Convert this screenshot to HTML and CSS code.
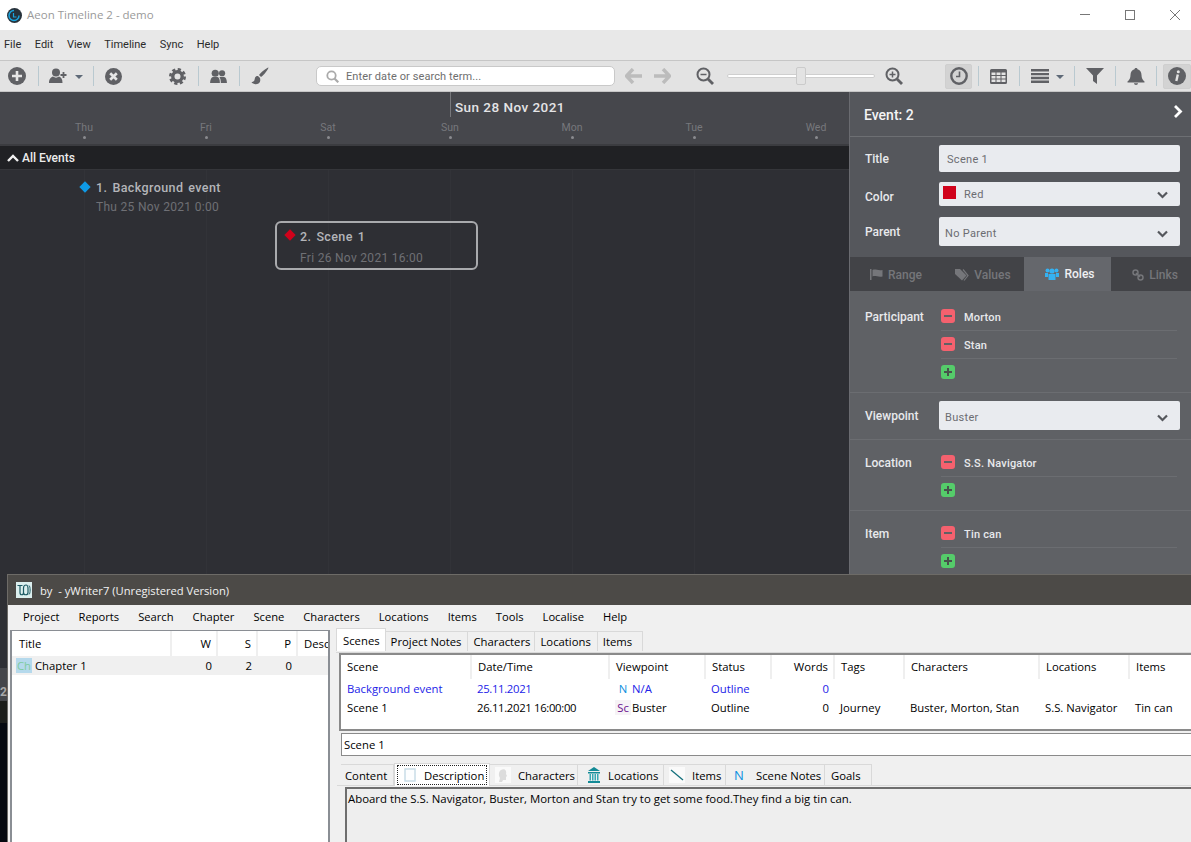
FILE: index.html
```html
<!DOCTYPE html>
<html lang="en">
<head>
    <meta charset="UTF-8">
    <meta name="viewport" content="width=device-width, initial-scale=1.0">
    <title>Aeon Timeline 2 - demo</title>
    <link rel="stylesheet" href="styles.css">
</head>
<body>

    <!-- Aeon Timeline window -->
    <div class="aeon">
        <div class="titlebar">
            <svg class="logo" width="15" height="15" viewBox="0 0 15 15"><circle cx="7.5" cy="7.5" r="7.5" fill="#27323b"/><path d="M7 2.5a5 5 0 1 0 5 5" fill="none" stroke="#1aa5e0" stroke-width="1.5"/><path d="M6.5 5v4h3" fill="none" stroke="#1aa5e0" stroke-width="1.2"/></svg>
            <span class="app-name">Aeon Timeline 2 - demo</span>
            <div class="window-buttons">
                <svg width="10" height="10" viewBox="0 0 10 10"><path d="M0 4.5h10" stroke="#777"/></svg>
                <svg width="10" height="10" viewBox="0 0 10 10"><rect x=".5" y=".5" width="9" height="9" fill="none" stroke="#777"/></svg>
                <svg width="10" height="10" viewBox="0 0 10 10"><path d="M0 0l10 10M10 0L0 10" stroke="#777"/></svg>
            </div>
        </div>

        <div class="menubar">
            <span>File</span><span>Edit</span><span>View</span><span>Timeline</span><span>Sync</span><span>Help</span>
        </div>

        <div class="toolbar">
            <svg class="tool m8" width="18" height="18" viewBox="0 0 18 18"><circle cx="9" cy="9" r="9" fill="#606165"/><path d="M9 4v10M4 9h10" stroke="#e6e6e6" stroke-width="2.6"/></svg>
            <i class="sep m12"></i>
            <svg class="tool m10" width="18" height="16" viewBox="0 0 18 16"><circle cx="7" cy="4.5" r="4" fill="#606165"/><path d="M0 15c0-4 2-6 4-6.500 2 1.500 4 1.500 6 0 2 .5 3.500 2.500 3.500 6.500z" fill="#606165"/><path d="M14.500 4v6M11.500 7h6" stroke="#606165" stroke-width="1.800"/></svg>
            <i class="caret m8"></i>
            <i class="sep m10"></i>
            <svg class="tool m11" width="17" height="17" viewBox="0 0 18 18"><circle cx="9" cy="9" r="9" fill="#606165"/><path d="M5.500 5.500l7 7M12.500 5.500l-7 7" stroke="#e6e6e6" stroke-width="2.800"/></svg>
            <svg class="tool m47" width="17" height="17" viewBox="0 0 18 18"><circle cx="9" cy="9" r="5" fill="none" stroke="#606165" stroke-width="3.600"/><circle cx="9" cy="9" r="7.600" fill="none" stroke="#606165" stroke-width="2.800" stroke-dasharray="3.400 2.570"/></svg>
            <i class="sep m12"></i>
            <svg class="tool m11" width="17" height="15" viewBox="0 0 18 16"><circle cx="5.500" cy="4.500" r="3.800" fill="#606165"/><circle cx="12.800" cy="4.500" r="3.300" fill="#606165"/><path d="M0 15c0-4 1.500-6 3-6.500h5c1.500.5 2.500 2.500 2.500 6.500z" fill="#606165"/><path d="M11.500 15c0-3-.5-5-1.500-6.500h5c1.800.5 3 2.500 3 6.500z" fill="#606165"/></svg>
            <i class="sep m12"></i>
            <svg class="tool m11" width="18" height="18" viewBox="0 0 18 18"><path d="M17.500.5c-2 .5-7 4-9.500 7.500l2 2c3.500-2.500 7-7.500 7.500-9.500z" fill="#606165"/><path d="M7 9c-3 0-3 2-3.500 4-.3 1.500-2 2-3 2 1 2 4.500 3 7 1.500 2-1.300 2-3.500 1.500-5.500z" fill="#606165"/></svg>

            <div class="search m47">
                <svg width="13" height="13" viewBox="0 0 13 13"><circle cx="5.500" cy="5.500" r="4.200" fill="none" stroke="#aaa" stroke-width="1.800"/><path d="M8.500 8.500l3.800 3.800" stroke="#aaa" stroke-width="2.200"/></svg>
                <span>Enter date or search term...</span>
            </div>

            <svg class="tool m10" width="18" height="16" viewBox="0 0 18 16"><path d="M8 1L1.500 8 8 15M2 8h15" fill="none" stroke="#bcbcbc" stroke-width="3.400"/></svg>
            <svg class="tool m10" width="18" height="16" viewBox="0 0 18 16"><path d="M10 1l6.500 7-6.500 7M16 8H1" fill="none" stroke="#bcbcbc" stroke-width="3.400"/></svg>
            <svg class="tool m25" width="18" height="18" viewBox="0 0 18 18"><circle cx="7.500" cy="7.500" r="6" fill="none" stroke="#606165" stroke-width="2"/><path d="M12 12l5 5" stroke="#606165" stroke-width="2.800"/><path d="M4.500 7.500h6" stroke="#606165" stroke-width="1.500"/></svg>
            <div class="zoom-slider m13"><i class="zoom-thumb"></i></div>
            <svg class="tool m10" width="18" height="18" viewBox="0 0 18 18"><circle cx="7.500" cy="7.500" r="6" fill="none" stroke="#606165" stroke-width="2"/><path d="M12 12l5 5" stroke="#606165" stroke-width="2.800"/><path d="M4.500 7.500h6M7.500 4.500v6" stroke="#606165" stroke-width="1.500"/></svg>

            <div class="tool-on m42">
                <svg width="18" height="18" viewBox="0 0 18 18"><circle cx="9" cy="9" r="7.700" fill="none" stroke="#606165" stroke-width="2.400"/><path d="M9.500 4.500v5H6" fill="none" stroke="#606165" stroke-width="1.600"/></svg>
            </div>
            <i class="sep m6"></i>
            <svg class="tool m11" width="17" height="15" viewBox="0 0 17 15"><path fill="#606165" d="M0 1.500A1.500 1.500 0 0 1 1.500 0h14A1.500 1.500 0 0 1 17 1.500v12a1.500 1.500 0 0 1-1.500 1.500h-14A1.500 1.500 0 0 1 0 13.500z"/><path fill="#e3e3e3" d="M1.500 3.500h4v2.500h-4zM6.500 3.500h4v2.500h-4zM11.500 3.500h4v2.500h-4zM1.500 7h4v2.500h-4zM6.500 7h4v2.500h-4zM11.500 7h4v2.500h-4zM1.500 10.500h4V13h-4zM6.500 10.500h4V13h-4zM11.500 10.500h4V13h-4z"/></svg>
            <i class="sep m12"></i>
            <svg class="tool m11" width="18" height="14" viewBox="0 0 18 14"><path fill="#606165" d="M0 0h18v2.400H0zM0 3.900h18v2.400H0zM0 7.800h18v2.400H0zM0 11.600h18V14H0z"/></svg>
            <i class="caret m7 caret-blue"></i>
            <i class="sep m10"></i>
            <svg class="tool m11" width="18" height="16" viewBox="0 0 18 16"><path fill="#606165" d="M0 0h18L11 7.500V16l-4-3V7.500z"/></svg>
            <i class="sep m11"></i>
            <svg class="tool m11" width="18" height="17" viewBox="0 0 18 17"><path fill="#606165" d="M9 0c1 0 1.500.6 1.500 1.300C13 2 14.500 4 14.500 7c0 3 1 5 3 6.500V14.500H.5V13.500c2-1.500 3-3.500 3-6.500 0-3 1.500-5 4-5.700C7.500.6 8 0 9 0zM7 15.300h4C11 16.300 10 17 9 17s-2-.7-2-1.700z"/></svg>
            <i class="sep m11"></i>
            <div class="tool-on m6 tool-info">
                <svg width="18" height="18" viewBox="0 0 18 18"><circle cx="9" cy="9" r="9" fill="#606165"/><circle cx="10.300" cy="4.700" r="1.500" fill="#e3e3e3"/><path d="M9.800 7.500l-1.500 6.500" stroke="#e3e3e3" stroke-width="2.400"/></svg>
            </div>
        </div>

        <div class="main">
            <!-- Timeline -->
            <div class="timeline">
                <div class="time-head">
                    <div class="month-row"><span class="month">Sun 28 Nov 2021</span></div>
                    <div class="day-row">
                        <div class="day">Thu<i></i></div>
                        <div class="day">Fri<i></i></div>
                        <div class="day">Sat<i></i></div>
                        <div class="day">Sun<i></i></div>
                        <div class="day">Mon<i></i></div>
                        <div class="day">Tue<i></i></div>
                        <div class="day">Wed<i></i></div>
                    </div>
                </div>
                <div class="group-bar">
                    <svg width="12" height="8" viewBox="0 0 12 8"><path d="M1 7l5-5 5 5" fill="none" stroke="#f2f2f2" stroke-width="2.400"/></svg>
                    All Events
                </div>
                <div class="canvas">
                    <div class="event event-one">
                        <i class="diamond diamond-blue"></i>
                        <div class="event-title">1. Background event</div>
                        <div class="event-date">Thu 25 Nov 2021 0:00</div>
                    </div>
                    <div class="event event-two">
                        <i class="diamond diamond-red"></i>
                        <div class="event-title">2. Scene 1</div>
                        <div class="event-date">Fri 26 Nov 2021 16:00</div>
                    </div>
                </div>
            </div>

            <!-- Inspector -->
            <div class="panel">
                <div class="panel-head">
                    <span>Event: 2</span>
                    <svg width="10" height="13" viewBox="0 0 10 13"><path d="M2 1l5.500 5.500L2 12" fill="none" stroke="#fff" stroke-width="2.800"/></svg>
                </div>

                <div class="fields">
                    <div class="field field-title">
                        <label>Title</label>
                        <div class="input">Scene 1</div>
                    </div>
                    <div class="field field-color">
                        <label>Color</label>
                        <div class="input select color-select">
                            <i class="swatch"></i><span>Red</span>
                            <svg class="chevron" width="11" height="8" viewBox="0 0 11 8"><path d="M1 1.500l4.500 4.500L10 1.500" fill="none" stroke="#55575c" stroke-width="2.200"/></svg>
                        </div>
                    </div>
                    <div class="field field-parent">
                        <label>Parent</label>
                        <div class="input select">
                            <span>No Parent</span>
                            <svg class="chevron" width="11" height="8" viewBox="0 0 11 8"><path d="M1 1.500l4.500 4.500L10 1.500" fill="none" stroke="#55575c" stroke-width="2.200"/></svg>
                        </div>
                    </div>
                </div>

                <div class="tabs">
                    <div class="tab tab-range">
                        <svg width="13" height="11" viewBox="0 0 13 11"><path fill="#75767a" d="M0 0h1.500v11H0zM2.500 1c3-1.500 5 1 10 0v6.500c-5 1-7-1.500-10 0z"/></svg>
                        Range
                    </div>
                    <div class="tab tab-values">
                        <svg width="14" height="12" viewBox="0 0 14 12"><path fill="#75767a" d="M0 0h5l6.500 6.500L7 11.500 0 5z"/><path d="M8 .5l5 6-4 5" fill="none" stroke="#75767a" stroke-width="1.200"/></svg>
                        Values
                    </div>
                    <div class="tab tab-roles active">
                        <svg width="14" height="12" viewBox="0 0 14 12"><g fill="#35b2f2"><circle cx="2.500" cy="2.500" r="2"/><circle cx="11.500" cy="2.500" r="2"/><circle cx="7" cy="3" r="2.600"/><path d="M0 5h3v4H0zM11 5h3v4h-3zM3.500 6h7v6h-7z"/></g></svg>
                        Roles
                    </div>
                    <div class="tab tab-links">
                        <svg width="12" height="12" viewBox="0 0 12 12"><g fill="none" stroke="#75767a" stroke-width="1.500"><circle cx="3.500" cy="3.500" r="2.500"/><circle cx="8.500" cy="8.500" r="2.500"/><path d="M4 4l4 4"/></g></svg>
                        Links
                    </div>
                </div>

                <div class="section section-first">
                    <label>Participant</label>
                    <div class="role-list">
                        <div class="role-row"><i class="btn-minus"></i>Morton</div>
                        <div class="role-row"><i class="btn-minus"></i>Stan</div>
                        <div class="role-add"><i class="btn-plus"></i></div>
                    </div>
                </div>
                <div class="section section-select">
                    <label>Viewpoint</label>
                    <div class="input select select-tall">
                        <span>Buster</span>
                        <svg class="chevron" width="11" height="8" viewBox="0 0 11 8"><path d="M1 1.500l4.500 4.500L10 1.500" fill="none" stroke="#55575c" stroke-width="2.200"/></svg>
                    </div>
                </div>
                <div class="section">
                    <label>Location</label>
                    <div class="role-list">
                        <div class="role-row"><i class="btn-minus"></i>S.S. Navigator</div>
                        <div class="role-add"><i class="btn-plus"></i></div>
                    </div>
                </div>
                <div class="section">
                    <label>Item</label>
                    <div class="role-list">
                        <div class="role-row"><i class="btn-minus"></i>Tin can</div>
                        <div class="role-add"><i class="btn-plus"></i></div>
                    </div>
                </div>
            </div>
        </div>
    </div>

    <!-- What shows behind, left of the yWriter window -->
    <div class="behind"><div class="behind-bar">02</div><div class="behind-mid"></div></div>

    <!-- yWriter window -->
    <div class="yw">
        <div class="yw-title">
            <svg width="16" height="16" viewBox="0 0 16 16"><rect width="16" height="16" fill="#dcefee"/><path d="M1.500 3.500h5M4 3.500v7c0 3 3.500 3 3.500 0V6M7.500 10.500c0 3 4.500 3 4.500 0V6c0-2-1-3-2-3s-2.500 1-2.500 3" fill="none" stroke="#1d5a63" stroke-width="1.200"/><path d="M13 3.500c1.500 1 1.500 8 0 9" fill="none" stroke="#1d5a63"/></svg>
            <span>by&nbsp; - yWriter7 (Unregistered Version)</span>
        </div>
        <div class="yw-menu">
            <span>Project</span><span>Reports</span><span>Search</span><span>Chapter</span><span>Scene</span><span>Characters</span><span>Locations</span><span>Items</span><span>Tools</span><span>Localise</span><span>Help</span>
        </div>
        <div class="yw-body">
            <!-- Chapter list -->
            <div class="chapters">
                <div class="ch-row ch-head">
                    <span class="ch-title">Title</span>
                    <span class="ch-num">W</span>
                    <span class="ch-num ch-s">S</span>
                    <span class="ch-num ch-s">P</span>
                    <span class="ch-desc">Desc</span>
                </div>
                <div class="ch-row ch-item">
                    <span class="ch-title"><b class="ch-icon">Ch</b>Chapter 1</span>
                    <span class="ch-num">0</span>
                    <span class="ch-num ch-s">2</span>
                    <span class="ch-num ch-s">0</span>
                    <span class="ch-desc"></span>
                </div>
            </div>

            <div class="yw-right">
                <div class="yw-tabs">
                    <span class="yw-tab active">Scenes</span>
                    <span class="yw-tab yw-tab-notes">Project Notes</span>
                    <span class="yw-tab">Characters</span>
                    <span class="yw-tab yw-tab-locs">Locations</span>
                    <span class="yw-tab yw-tab-items">Items</span>
                </div>

                <div class="scene-box">
                    <table class="scenes">
                        <colgroup>
                            <col class="c-scene"><col class="c-date"><col class="c-view"><col class="c-status"><col class="c-words"><col class="c-tags"><col class="c-chars"><col class="c-locs"><col class="c-items">
                        </colgroup>
                        <thead>
                            <tr><th>Scene</th><th>Date/Time</th><th>Viewpoint</th><th>Status</th><th class="num">Words</th><th>Tags</th><th>Characters</th><th>Locations</th><th>Items</th></tr>
                        </thead>
                        <tbody>
                            <tr class="unused">
                                <td>Background event</td><td class="when">25.11.2021</td>
                                <td class="view"><b class="vp vp-n">N</b>N/A</td>
                                <td>Outline</td><td class="num">0</td><td></td><td></td><td></td><td></td>
                            </tr>
                            <tr>
                                <td>Scene 1</td><td class="when">26.11.2021 16:00:00</td>
                                <td class="view"><b class="vp vp-sc">Sc</b>Buster</td>
                                <td>Outline</td><td class="num">0</td><td>Journey</td><td>Buster, Morton, Stan</td><td>S.S. Navigator</td><td>Tin can</td>
                            </tr>
                        </tbody>
                    </table>
                </div>

                <div class="scene-name">Scene 1</div>

                <div class="yw-subtabs">
                    <span class="sub-tab sub-content">Content</span>
                    <span class="sub-tab sub-active"><span class="focus-box">
                        <svg width="12" height="14" viewBox="0 0 12 14"><rect x="1" y="1" width="10" height="12" fill="#fdfeff" stroke="#c5dbe6" stroke-width="1.400"/></svg>
                        Description</span></span>
                    <span class="sub-tab sub-chars">
                        <svg class="sub-icon" width="16" height="16" viewBox="0 0 16 16"><rect width="16" height="16" fill="#fafafa"/><path d="M6 3c3-2 6 0 5 4l1 2-1 1v3H8l-1 2H4l1-4C3 8 4 4 6 3z" fill="#dcdcdc"/></svg>
                        Characters</span>
                    <span class="sub-tab sub-locs">
                        <svg class="sub-icon" width="14" height="16" viewBox="0 0 14 16"><path d="M7 0l6 4H1z" fill="#138a96"/><path d="M1 5h12v1.500H1zM1 14h12v2H1z" fill="#138a96"/><path d="M2.500 7h1.500v6.500H2.500zM5 7h1.500v6.500H5zM7.500 7H9v6.500H7.500zM10 7h1.500v6.500H10z" fill="#37a7b2"/></svg>
                        Locations</span>
                    <span class="sub-tab sub-items">
                        <svg class="sub-icon" width="16" height="16" viewBox="0 0 16 16"><rect width="16" height="16" fill="#fafafa"/><path d="M2 3l12 10" stroke="#14707c" stroke-width="1.300"/></svg>
                        Items</span>
                    <span class="sub-tab sub-notes"><b class="note-n">N</b>Scene Notes</span>
                    <span class="sub-tab sub-goals">Goals</span>
                </div>

                <div class="desc-box">Aboard the S.S. Navigator, Buster, Morton and Stan try to get some food.They find a big tin can.</div>
            </div>
        </div>
    </div>

</body>
</html>
```

FILE: styles.css
```css
* {
    box-sizing: border-box;
    margin: 0;
    padding: 0;
}

html, body {
    height: 100%;
    overflow: hidden;
}

body {
    position: relative;
    font-family: Roboto, sans-serif;
    background-color: #2e2f34;
}

/* Aeon window */

.aeon {
    display: flex;
    flex-direction: column;
    height: 842px;
}

.titlebar {
    display: flex;
    align-items: center;
    height: 30px;
    flex: none;
    padding-left: 7px;
    background-color: #fff;
}

.logo {
    margin-right: 5px;
}

.app-name {
    margin-bottom: 1px;
    font-family: "Open Sans", sans-serif;
    font-size: 11.5px;
    color: #9a9a9a;
}

.window-buttons {
    display: flex;
    gap: 35px;
    margin-left: auto;
    margin-right: 11px;
}

.menubar {
    display: flex;
    align-items: center;
    gap: 13.5px;
    height: 30px;
    flex: none;
    padding: 0 0 2px 4px;
    font-size: 11px;
    color: #2b2b2b;
    background-color: #e8e8e8;
}

.toolbar {
    display: flex;
    align-items: center;
    height: 32px;
    flex: none;
    border-top: 1px solid #c6c6c6;
    border-bottom: 1px solid #c6c6c6;
    background-color: #e3e3e3;
}

.tool {
    flex: none;
}

.m6 { margin-left: 6px; }
.m7 { margin-left: 7px; }
.m8 { margin-left: 8px; }
.m10 { margin-left: 10px; }
.m11 { margin-left: 11px; }
.m12 { margin-left: 12px; }
.m13 { margin-left: 13px; }
.m25 { margin-left: 25px; }
.m42 { margin-left: 42px; }
.m47 { margin-left: 47px; }

.sep {
    width: 1px;
    height: 20px;
    flex: none;
    background-color: #b9c9d0;
}

.caret {
    width: 0;
    height: 0;
    flex: none;
    margin-top: 2px;
    border-left: 4px solid transparent;
    border-right: 4px solid transparent;
    border-top: 4px solid #5f6a78;
}

.search {
    display: flex;
    align-items: center;
    gap: 7px;
    width: 299px;
    height: 20px;
    flex: none;
    padding-left: 9px;
    border: 1px solid #c9c9c9;
    border-radius: 5px;
    background-color: #fff;
    font-size: 11px;
    letter-spacing: .1px;
    color: #6e6e6e;
}

.zoom-slider {
    position: relative;
    width: 148px;
    height: 4px;
    flex: none;
    border: 1px solid #cfcfcf;
    border-radius: 2px;
    background-color: #fff;
}

.zoom-thumb {
    position: absolute;
    left: 68px;
    top: -8px;
    width: 10px;
    height: 18px;
    border: 1px solid #cbcbcb;
    border-radius: 2px;
    background-color: #e3e3e3;
}

.tool-on {
    display: flex;
    align-items: center;
    justify-content: center;
    width: 27px;
    height: 25px;
    flex: none;
    border: 1px solid #cfcfcf;
    border-radius: 2px;
    background-color: #d3d3d3;
}

.tool-info {
    width: 28px;
}

.main {
    display: flex;
    flex: 1;
    min-height: 0;
}

/* Timeline */

.timeline {
    display: flex;
    flex-direction: column;
    width: 849px;
    flex: none;
    overflow: hidden;
}

.time-head {
    height: 54px;
    flex: none;
    background-color: #46474c;
    border-bottom: 2px solid #3b3c40;
}

.month-row {
    height: 25px;
    padding-left: 450px;
}

.month {
    display: block;
    height: 25px;
    padding: 7px 0 0 4px;
    border-left: 1px solid #77787c;
    font-size: 13.5px;
    font-weight: 500;
    letter-spacing: .45px;
    white-space: nowrap;
    color: #e4e4e6;
}

.day-row {
    display: flex;
    padding-left: 23px;
}

.day {
    display: flex;
    flex-direction: column;
    align-items: center;
    width: 122px;
    flex: none;
    padding-top: 4px;
    font-size: 10.5px;
    color: #77787c;
}

.day i {
    width: 3px;
    height: 3px;
    margin-top: 2px;
    border-radius: 50%;
    background-color: #8a8b8f;
}

.group-bar {
    display: flex;
    align-items: center;
    gap: 3px;
    height: 24px;
    flex: none;
    padding-left: 7px;
    border-bottom: 1px solid #35363a;
    background-color: #202124;
    font-size: 12px;
    font-weight: 500;
    color: #ececec;
}

.canvas {
    position: relative;
    flex: 1;
    background-color: #2e2f34;
    background-image: repeating-linear-gradient(90deg, transparent 0, transparent 121px, #323338 121px, #323338 122px);
    background-position: -37px 0;
}

.event {
    position: absolute;
}

.event-title {
    font-size: 12.5px;
    font-weight: 500;
    letter-spacing: .4px;
    word-spacing: 1.5px;
    color: #b4b5b9;
}

.event-date {
    margin-top: 5px;
    font-size: 12px;
    letter-spacing: .3px;
    color: #6f7075;
}

.diamond {
    position: absolute;
    width: 8px;
    height: 8px;
    transform: rotate(45deg);
}

.diamond-blue {
    left: -15px;
    top: 3px;
    background-color: #0f9ae6;
}

.diamond-red {
    left: -16px;
    top: 4px;
    background-color: #d0021b;
}

.event-one {
    left: 96px;
    top: 10px;
}

.event-two {
    left: 275px;
    top: 51px;
    width: 203px;
    height: 49px;
    padding: 6px 0 0 23px;
    border: 2px solid #a9aaad;
    border-radius: 6px;
}

.event-two .event-date {
    margin-top: 7px;
}

.event-two .diamond {
    left: 9px;
    top: 8px;
}

/* Inspector */

.panel {
    width: 342px;
    flex: none;
    border-left: 1px solid #6a6b70;
    background-color: #5f6165;
    font-size: 12px;
    color: #e8e9ec;
}

.panel label {
    font-weight: 500;
}

.panel-head {
    display: flex;
    align-items: center;
    justify-content: space-between;
    height: 45px;
    padding: 2px 8px 0 14px;
    border-bottom: 1px solid #6d6f73;
    background-color: #55575c;
    font-size: 14px;
    font-weight: 500;
    color: #f4f4f5;
}

.panel-head svg {
    margin-bottom: 7px;
}

.fields {
    height: 120px;
    padding: 8px 11px 0 15px;
    background-color: #55575c;
}

.field {
    display: flex;
    align-items: center;
}

.field label {
    width: 74px;
    flex: none;
}

.field-title {
    height: 27px;
}

.field-title label, .field-title .input {
    padding-top: 1px;
}

.field-color {
    height: 24px;
    margin-top: 10px;
}

.field-color label {
    padding-top: 5px;
}

.field-parent {
    height: 29px;
    margin-top: 11px;
}

.input {
    display: flex;
    align-items: center;
    flex: 1;
    height: 100%;
    padding-left: 8px;
    border-radius: 2px;
    background-color: #e9ebef;
    font-size: 11px;
    letter-spacing: .3px;
    color: #6c6d72;
}

.select {
    position: relative;
    padding: 3px 0 0 6px;
}

.color-select {
    padding: 0 0 0 4px;
}

.swatch {
    width: 13px;
    height: 13px;
    margin: -4px 8px 0 0;
    background-color: #d0021b;
}

.chevron {
    position: absolute;
    right: 12px;
    top: 50%;
    margin-top: -2px;
}

.color-select .chevron {
    margin-top: -3px;
}

.tabs {
    display: flex;
    height: 34px;
    padding-top: 1px;
    background-color: #424347;
    font-size: 12px;
    font-weight: 500;
    color: #75767a;
}

.tab {
    display: flex;
    align-items: center;
    justify-content: center;
    gap: 5px;
}

.tab-range { width: 88px; padding-left: 4px; }
.tab-values { width: 86px; padding-left: 4px; }
.tab-roles { width: 87px; padding-left: 5px; margin-top: -1px; }
.tab-links { flex: 1; padding-left: 8px; }

.tab.active {
    background-color: #65676c;
    color: #f0f0f2;
}

.section {
    display: flex;
    padding: 9px 14px 5px 15px;
    border-bottom: 1px solid #6b6d71;
    background-color: #5f6165;
}

.section-first {
    padding-top: 12px;
}

.section label {
    width: 76px;
    flex: none;
    padding-top: 7px;
}

.section-select {
    align-items: center;
    height: 47px;
    padding: 8px 11px 9px 15px;
}

.section-select label {
    width: 74px;
    padding-top: 0;
}

.select-tall {
    height: 29px;
}

.role-list {
    flex: 1;
    font-size: 11px;
    font-weight: 500;
    letter-spacing: .2px;
}

.role-row {
    display: flex;
    align-items: center;
    height: 28px;
    padding-top: 1px;
    border-bottom: 1px solid #6b6d71;
}

.role-add {
    display: flex;
    align-items: center;
    height: 28px;
}

.btn-minus, .btn-plus {
    position: relative;
    width: 14px;
    height: 14px;
    flex: none;
    border-radius: 3px;
}

.btn-minus {
    margin: -3px 9px 0 0;
    background-color: #f4616e;
}

.btn-minus::after {
    content: "";
    position: absolute;
    left: 3px;
    top: 6px;
    width: 8px;
    height: 2px;
    background-color: #5f6165;
}

.btn-plus {
    margin-top: -2px;
    background-color: #55cc6a;
}

.btn-plus::before, .btn-plus::after {
    content: "";
    position: absolute;
    background-color: #48524c;
}

.btn-plus::before {
    left: 3px;
    top: 6px;
    width: 8px;
    height: 2px;
}

.btn-plus::after {
    left: 6px;
    top: 3px;
    width: 2px;
    height: 8px;
}

/* Sliver of the desktop left of the yWriter window */

.behind {
    position: absolute;
    left: 0;
    top: 668px;
    bottom: 0;
    width: 8px;
    overflow: hidden;
    background-color: #05080f;
}

.behind-bar {
    height: 33px;
    padding-top: 17px;
    text-indent: -7px;
    white-space: nowrap;
    font-size: 12px;
    font-weight: 700;
    color: #a8a8a8;
    background-color: #45464a;
}

.behind-mid {
    height: 22px;
    background-color: #1c1d1a;
}

/* yWriter window */

.yw {
    position: absolute;
    left: 7px;
    top: 574px;
    right: 0;
    bottom: 0;
    overflow: hidden;
    border-left: 1px solid #6d6b67;
    border-top: 1px solid #6d6b67;
    background-color: #f0f0f0;
    font-family: "Open Sans", sans-serif;
    font-size: 11.3px;
    color: #000;
}

.yw-title {
    display: flex;
    align-items: center;
    gap: 8px;
    height: 30px;
    padding-left: 8px;
    background-color: #4c4a47;
    font-size: 11.2px;
    color: #f2f2f2;
}

.yw-menu {
    display: flex;
    align-items: center;
    gap: 19px;
    height: 25px;
    padding: 0 0 2px 15px;
    background-color: #f0f0f0;
    font-size: 11.2px;
}

.yw-body {
    display: flex;
    height: 212px;
}

.chapters {
    width: 320px;
    flex: none;
    margin-left: 2px;
    border: solid #8a8e94;
    border-width: 1px 2px 0;
    background-color: #fff;
}

.ch-row {
    display: flex;
    align-items: center;
}

.ch-head {
    height: 25px;
}

.ch-head span {
    display: flex;
    align-items: center;
    height: 100%;
    border-right: 2px solid #efefef;
}

.ch-head .ch-num {
    justify-content: flex-end;
}

.ch-item {
    height: 19px;
    background-color: #f0f0f0;
}

.ch-title {
    width: 160px;
    flex: none;
    padding-left: 6px;
}

.ch-head .ch-title {
    padding-left: 7px;
}

.ch-num {
    width: 46px;
    flex: none;
    padding-right: 5px;
    text-align: right;
}

.ch-item .ch-num {
    padding-right: 6px;
}

.ch-s {
    width: 40px;
}

.ch-desc {
    flex: 1;
    overflow: hidden;
    padding-left: 6px;
}

.ch-head .ch-desc {
    border-right: none;
}

.ch-icon {
    display: inline-block;
    width: 16px;
    margin: 0 3px 0 -2px;
    background-color: #b5d9ec;
    font-weight: 400;
    text-align: center;
    color: #7fcba0;
}

.yw-right {
    flex: 1;
    min-width: 0;
    padding-left: 7px;
}

.yw-tabs {
    display: flex;
    align-items: flex-end;
    height: 23px;
    padding-bottom: 1px;
    margin-left: -1px;
    border-bottom: 1px solid #d9d9d9;
}

.yw-tab {
    display: flex;
    align-items: center;
    height: 20px;
    padding: 0 4px 0 5px;
    border: 1px solid #d9d9d9;
    border-bottom: none;
    border-left: none;
}

.yw-tab.active {
    height: 23px;
    padding: 0 5px 0 6px;
    border-left: 1px solid #d9d9d9;
    background-color: #fff;
}

.yw-tab-notes { padding-right: 6px; }
.yw-tab-locs { padding-right: 6px; }
.yw-tab-items { padding-right: 10px; }

.scene-box {
    height: 78px;
    margin-left: 2px;
    border: solid #8a8a8a;
    border-width: 2px 0 2px 2px;
    overflow: hidden;
    background-color: #fff;
}

.scenes {
    width: 851px;
    table-layout: fixed;
    border-collapse: collapse;
}

.c-scene { width: 130px; }
.c-date { width: 138px; }
.c-view { width: 96px; }
.c-status { width: 66px; }
.c-words { width: 63px; }
.c-tags { width: 70px; }
.c-chars { width: 135px; }
.c-locs { width: 90px; }
.c-items { width: 63px; }

.scenes th {
    height: 24px;
    padding: 0 0 1px 6px;
    border-right: 2px solid #efefef;
    font-weight: 400;
    text-align: left;
}

.scenes th:last-child {
    border-right: none;
}

.scenes td {
    height: 19px;
    padding-left: 6px;
    white-space: nowrap;
    overflow: hidden;
}

.scenes .when {
    letter-spacing: -.32px;
}

.scenes .num {
    padding-left: 0;
    padding-right: 5px;
    text-align: right;
}

.scenes .view {
    padding-left: 6px;
}

.unused {
    color: #2222e8;
}

.vp {
    display: inline-block;
    width: 16px;
    margin-right: 1px;
    font-weight: 400;
    text-align: center;
}

.vp-n {
    color: #0a8fe0;
}

.vp-sc {
    background-color: #f6f3f6;
    color: #6a0f8e;
}

.scene-name {
    display: flex;
    align-items: center;
    height: 23px;
    margin: 2px 0 0 4px;
    padding: 0 0 1px 2px;
    border: 1px solid #8a8a8a;
    border-right: none;
    background-color: #fff;
}

.yw-subtabs {
    display: flex;
    align-items: flex-end;
    height: 30px;
    border-bottom: 1px solid #d9d9d9;
}

.sub-tab {
    display: flex;
    align-items: center;
    height: 21px;
    border-top: 1px solid #d9d9d9;
    border-right: 1px solid #d9d9d9;
}

.sub-content { width: 53px; margin-left: 4px; padding-left: 4px; }
.sub-active { width: 96px; height: 23px; margin-bottom: -1px; padding: 1px 2px; border-left: 1px solid #d9d9d9; background-color: #fff; }
.sub-chars { width: 88px; padding-left: 5px; }
.sub-locs { width: 86px; padding-left: 9px; }
.sub-items { width: 62px; padding-left: 5px; }
.sub-notes { width: 99px; padding-left: 8px; }
.sub-goals { width: 47px; padding-left: 6px; }

.focus-box {
    display: flex;
    align-items: center;
    gap: 8px;
    width: 100%;
    height: 100%;
    padding-left: 6px;
    border: 1px dotted #222;
}

.sub-icon {
    margin-right: 7px;
}

.note-n {
    width: 16px;
    margin-right: 6px;
    font-size: 13px;
    font-weight: 400;
    color: #0a8fe0;
}

.desc-box {
    height: 60px;
    margin: 1px 0 0 8px;
    padding: 2px 0 0 1px;
    border: solid #6e6e6e;
    border-width: 2px 0 0 2px;
    background-color: #eeeeee;
    font-size: 11.4px;
}
```
